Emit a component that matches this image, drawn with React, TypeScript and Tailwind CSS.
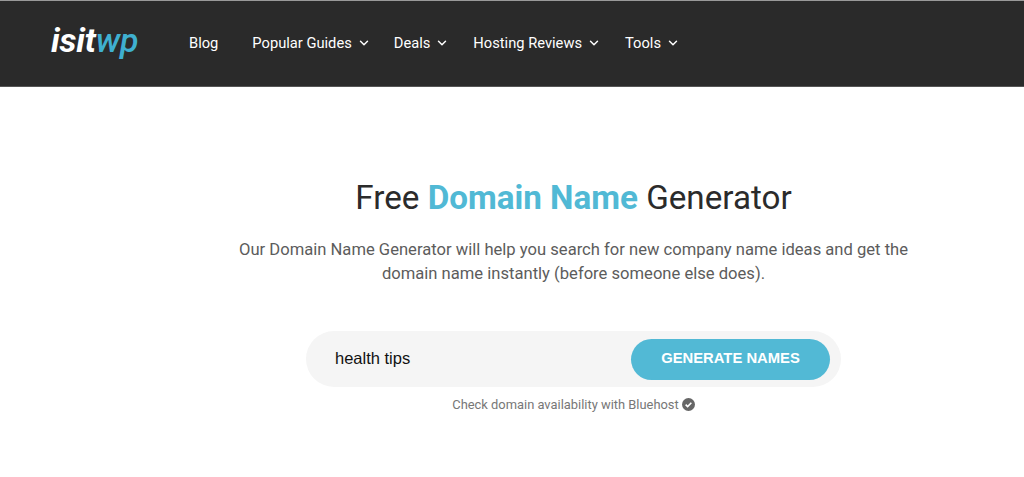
import { ChevronDown } from "lucide-react";

const navItems = [
  { label: "Popular Guides", className: "ml-[34px]" },
  { label: "Deals", className: "ml-[23px]" },
  { label: "Hosting Reviews", className: "ml-[24px]" },
  { label: "Tools", className: "ml-[24px]" },
];

const Navbar = () => (
  <header className="h-[87px] bg-[#2a2a2a] border-t border-t-[#999] border-b border-b-[#555] flex items-center pl-[51px]">
    <div className="w-[138px] text-[34px] leading-none italic font-bold tracking-[-0.2px] -mt-[7px] font-['Roboto',sans-serif]">
      <span className="text-white">isit</span>
      <span className="text-[#3fb0d0] font-medium">wp</span>
    </div>
    <nav className="flex items-center text-[14.7px] text-white font-['Roboto',sans-serif]">
      <a>Blog</a>
      {navItems.map((item) => (
        <a key={item.label} className={`flex items-center ${item.className}`}>
          {item.label}
          <ChevronDown className="ml-[5px] h-[14px] w-[14px]" strokeWidth={2.5} />
        </a>
      ))}
    </nav>
  </header>
);

export default function App() {
  return (
    <div className="h-[477px] overflow-hidden bg-white font-['Roboto',sans-serif]">
      <Navbar />
      <main className="flex flex-col items-center pl-[123px] pt-[92px]">
        <h1 className="text-[33.2px] leading-[38px] text-[#2b2b2b]">
          Free <span className="font-bold text-[#51b9d5]">Domain Name</span> Generator
        </h1>
        <p className="mt-[21px] text-center text-[16.6px] leading-[24px] text-[#5c5c5c] w-[720px]">
          Our Domain Name Generator will help you search for new company name ideas and get the
          <br />
          domain name instantly (before someone else does).
        </p>
        <form className="mt-[45px] w-[535px] h-[56px] rounded-full bg-[#f5f5f5] flex items-center justify-between pl-[29px] pr-[11px]">
          <span className="pb-[2px] text-[16.5px] text-[#111] font-['Liberation_Sans',sans-serif]">health tips</span>
          <button className="h-[41px] w-[199px] rounded-full bg-[#52b9d5] pb-[2px] text-white text-[14.8px] font-bold font-['Liberation_Sans',sans-serif]">
            GENERATE NAMES
          </button>
        </form>
        <div className="mt-[8px] flex items-center text-[12.9px] text-[#777]">
          Check domain availability with Bluehost
          <svg viewBox="0 0 16 16" className="ml-[3px] h-[13px] w-[13px]">
            <circle cx="8" cy="8" r="8" fill="#666" />
            <path d="M4.5 8.2l2.4 2.4 4.6-4.8" fill="none" stroke="#fff" strokeWidth="2" />
          </svg>
        </div>
      </main>
    </div>
  );
}
